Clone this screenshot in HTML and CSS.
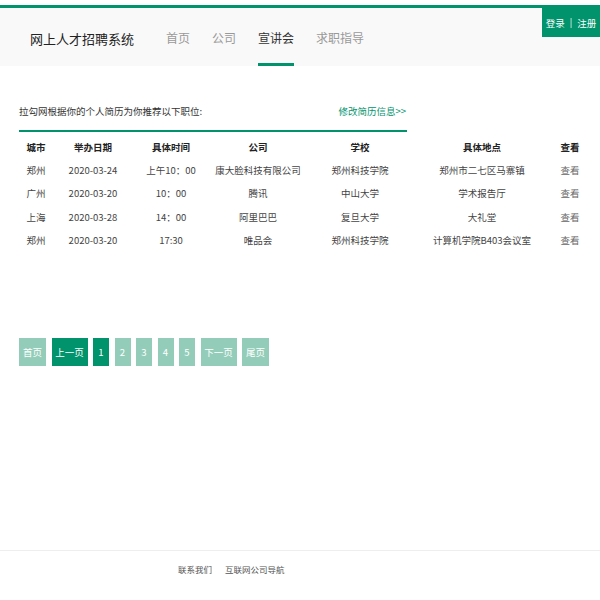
FILE: index.html
```html
<!DOCTYPE html>
<html lang="zh">
<head>
<meta charset="utf-8">
<title>网上人才招聘系统</title>
<link rel="stylesheet" href="styles.css">
</head>
<body>
<div class="page">
  <div class="topbar"></div>
  <header class="header">
    <div class="logo">网上人才招聘系统</div>
    <nav class="nav">
      <a class="nav-item">首页</a>
      <a class="nav-item">公司</a>
      <a class="nav-item active">宣讲会</a>
      <a class="nav-item">求职指导</a>
    </nav>
    <div class="auth"><span>登录</span><span class="sep">|</span><span>注册</span></div>
  </header>

  <main class="main">
    <div class="intro">
      <span class="intro-text">拉勾网根据你的个人简历为你推荐以下职位:</span>
      <a class="intro-link">修改简历信息&gt;&gt;</a>
    </div>

    <div class="table">
      <div class="th">城市</div><div class="th">举办日期</div><div class="th">具体时间</div><div class="th">公司</div><div class="th">学校</div><div class="th">具体地点</div><div class="th">查看</div>

      <div class="td">郑州</div><div class="td">2020-03-24</div><div class="td">上午10：00</div><div class="td">康大脸科技有限公司</div><div class="td">郑州科技学院</div><div class="td">郑州市二七区马寨镇</div><div class="td view">查看</div>

      <div class="td">广州</div><div class="td">2020-03-20</div><div class="td">10：00</div><div class="td">腾讯</div><div class="td">中山大学</div><div class="td">学术报告厅</div><div class="td view">查看</div>

      <div class="td">上海</div><div class="td">2020-03-28</div><div class="td">14：00</div><div class="td">阿里巴巴</div><div class="td">复旦大学</div><div class="td">大礼堂</div><div class="td view">查看</div>

      <div class="td">郑州</div><div class="td">2020-03-20</div><div class="td">17:30</div><div class="td">唯品会</div><div class="td">郑州科技学院</div><div class="td">计算机学院B403会议室</div><div class="td view">查看</div>
    </div>

    <div class="pager">
      <a class="pg wide">首页</a>
      <a class="pg wider dark">上一页</a>
      <a class="pg num dark">1</a>
      <a class="pg num">2</a>
      <a class="pg num">3</a>
      <a class="pg num">4</a>
      <a class="pg num">5</a>
      <a class="pg wider">下一页</a>
      <a class="pg wide">尾页</a>
    </div>
  </main>

  <footer class="footer">
    <a class="foot-link">联系我们</a>
    <a class="foot-link">互联网公司导航</a>
  </footer>
</div>
</body>
</html>
```

FILE: styles.css
```css
* { box-sizing: border-box; }
html, body { margin: 0; padding: 0; background: #fff; }
body {
  font-family: "Noto Sans CJK SC", "Noto Sans", sans-serif;
  color: #333;
}
a { text-decoration: none; color: inherit; cursor: pointer; }

.page {
  min-height: 600px;
  display: flex;
  flex-direction: column;
  padding-top: 5px;
}

.topbar {
  height: 3px;
  background: #00936c;
}

.header {
  height: 58px;
  background: #f9f9f9;
  display: flex;
  align-items: center;
}

.logo {
  padding-left: 30px;
  width: 166px;
  font-size: 13px;
  color: #222;
  line-height: 1;
  padding-top: 2px;
}

.nav {
  display: flex;
  gap: 22px;
  height: 100%;
}

.nav-item {
  height: 100%;
  display: flex;
  align-items: center;
  font-size: 12px;
  color: #999;
  border-bottom: 3px solid transparent;
  padding-top: 3px;
}

.nav-item.active {
  color: #333;
  border-bottom-color: #00936c;
}

.auth {
  margin-left: auto;
  align-self: flex-start;
  width: 58px;
  height: 29px;
  background: #00936c;
  color: #fff;
  font-size: 9.5px;
  display: flex;
  align-items: center;
  justify-content: center;
  gap: 5px;
}

.auth .sep { font-size: 9px; }

.main {
  padding: 38px 0 0 19px;
}

.intro {
  width: 388px;
  display: flex;
  justify-content: space-between;
  align-items: center;
  font-size: 9.5px;
  padding-bottom: 12px;
  border-bottom: 2px solid #00936c;
}

.intro-text { color: #333; }
.intro-link { color: #00936c; padding-right: 1px; }

.table {
  display: grid;
  grid-template-columns: 34px 80px 76px 98px 106px 138px 38px;
  grid-template-rows: 22px;
  grid-auto-rows: 23.5px;
  padding-top: 4px;
  font-size: 9.5px;
}

.th, .td {
  display: flex;
  align-items: center;
  justify-content: center;
  white-space: nowrap;
}

.th {
  font-weight: 700;
  color: #222;
}

.td { color: #444; }
.td.view { color: #666; }

.pager {
  display: flex;
  gap: 5.5px;
  margin-top: 86px;
}

.pg {
  height: 28px;
  display: flex;
  align-items: center;
  justify-content: center;
  background: #93cdb9;
  color: #fff;
  font-size: 9.5px;
}

.pg.wide { width: 27px; }
.pg.wider { width: 36px; }
.pg.num { width: 16px; }
.pg.dark { background: #00936c; }

.footer {
  margin-top: auto;
  height: 50px;
  border-top: 1px solid #eeeeee;
  padding: 12px 0 0 178px;
  display: flex;
  gap: 13px;
  font-size: 8.5px;
  color: #555;
}
```
